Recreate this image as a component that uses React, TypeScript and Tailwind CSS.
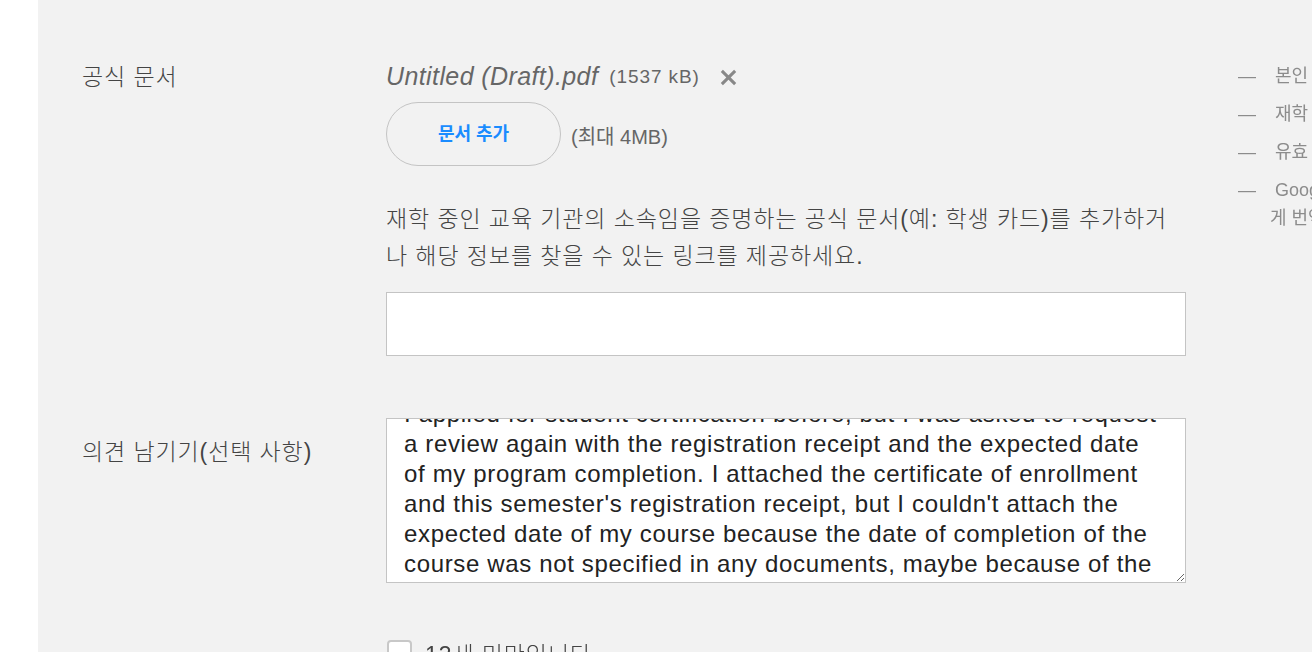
import React, { useEffect, useRef } from "react";

const font = "font-['Liberation_Sans','Noto_Sans_CJK_KR',sans-serif]";

const comment =
  "I applied for student certification before, but I was asked to request a review again with the registration receipt and the expected date of my program completion. I attached the certificate of enrollment and this semester's registration receipt, but I couldn't attach the expected date of my course because the date of completion of the course was not specified in any documents, maybe because of the COVID-19 situation. Please let me know if anything else is needed.";

const tips = [
  "본인 이름이 문서에 표시되어야 합니다",
  "재학 중인 교육 기관명이 표시되어야 합니다",
  "유효 기간 또는 발급일이 표시되어야 합니다",
];

const App = () => {
  const areaRef = useRef<HTMLTextAreaElement>(null);

  useEffect(() => {
    if (areaRef.current) areaRef.current.scrollTop = 30;
  }, []);

  return (
    <div className={`${font} flex w-[1312px] h-[652px] overflow-hidden bg-white`}>
      <div className="w-[38px] shrink-0 bg-white" />
      <main className="flex-1 bg-[#f2f2f2] pl-[44px] pt-[62px] flex">
        <section className="w-[1104px] shrink-0">
          {/* official document */}
          <div className="flex">
            <h2 className="w-[304px] shrink-0 text-[23px] tracking-[0.9px] leading-[30px] font-light text-[#444]">공식 문서</h2>
            <div className="w-[800px]">
              <div className="flex items-center h-[30px]">
                <span className="italic font-light text-[25px] tracking-[0.4px] text-[#666]">Untitled (Draft).pdf</span>
                <span className="ml-[11px] text-[19px] tracking-[0.9px] text-[#666]">(1537 kB)</span>
                <button className="ml-[19px] text-[#888]">
                  <svg width="19" height="19" viewBox="0 0 20 20">
                    <path d="M3 3 L17 17 M17 3 L3 17" stroke="currentColor" strokeWidth="3.2" />
                  </svg>
                </button>
              </div>
              <div className="flex items-center mt-[10px]">
                <button className="w-[175px] h-[64px] rounded-full border border-[#c4c4c4] text-[#1a8cff] text-[18px] font-bold">
                  문서 추가
                </button>
                <span className="ml-[10px] mt-[6px] text-[20px] text-[#666]">(최대 4MB)</span>
              </div>
              <p className="mt-[35px] text-[23px] tracking-[0.9px] leading-[37px] font-light text-[#444]">
                재학 중인 교육 기관의 소속임을 증명하는 공식 문서(예: 학생 카드)를 추가하거
                <br />나 해당 정보를 찾을 수 있는 링크를 제공하세요.
              </p>
              <input className="mt-[17px] w-[800px] h-[64px] bg-white border border-[#c4c4c4] outline-none px-[16px] text-[20px]" />
            </div>
          </div>

          {/* comment */}
          <div className="flex mt-[62px]">
            <h2 className="w-[304px] shrink-0 pt-[16px] text-[23px] tracking-[0.9px] leading-[37px] font-light text-[#444]">
              의견 남기기(선택 사항)
            </h2>
            <textarea
              ref={areaRef}
              defaultValue={comment}
              className="w-[800px] h-[165px] bg-white border border-[#c4c4c4] outline-none pl-[17px] pr-[18px] pt-[10px] text-[24px] tracking-[0.65px] leading-[30px] text-[#222] font-['Liberation_Sans',sans-serif] [scrollbar-width:none]"
            />
          </div>

          <label className="flex items-start ml-[304px] mt-[57px] gap-[13px]">
            <span className="ml-[1px] w-[25px] h-[25px] shrink-0 rounded-[4px] border-2 border-[#c8c8c8] bg-white" />
            <span className="text-[23px] tracking-[0.9px] leading-[30px] font-light text-[#444]">13세 미만입니다</span>
          </label>
        </section>

        {/* tips */}
        <aside className="ml-[52px] w-[400px] shrink-0 text-[18px] text-[#8c8c8c]">
          {tips.map((t) => (
            <div key={t} className="flex leading-[28px] mb-[10px]">
              <span className="w-[32px] shrink-0">—</span>
              <span className="indent-[5px]">{t}</span>
            </div>
          ))}
          <div className="flex leading-[28px]">
            <span className="w-[32px] shrink-0">—</span>
            <span className="indent-[5px]">
              Google 번역으로 쉽
              <br />
              게 번역할 수 있는 언어로 작성되어야 합니다
            </span>
          </div>
        </aside>
      </main>
    </div>
  );
};

export default App;
